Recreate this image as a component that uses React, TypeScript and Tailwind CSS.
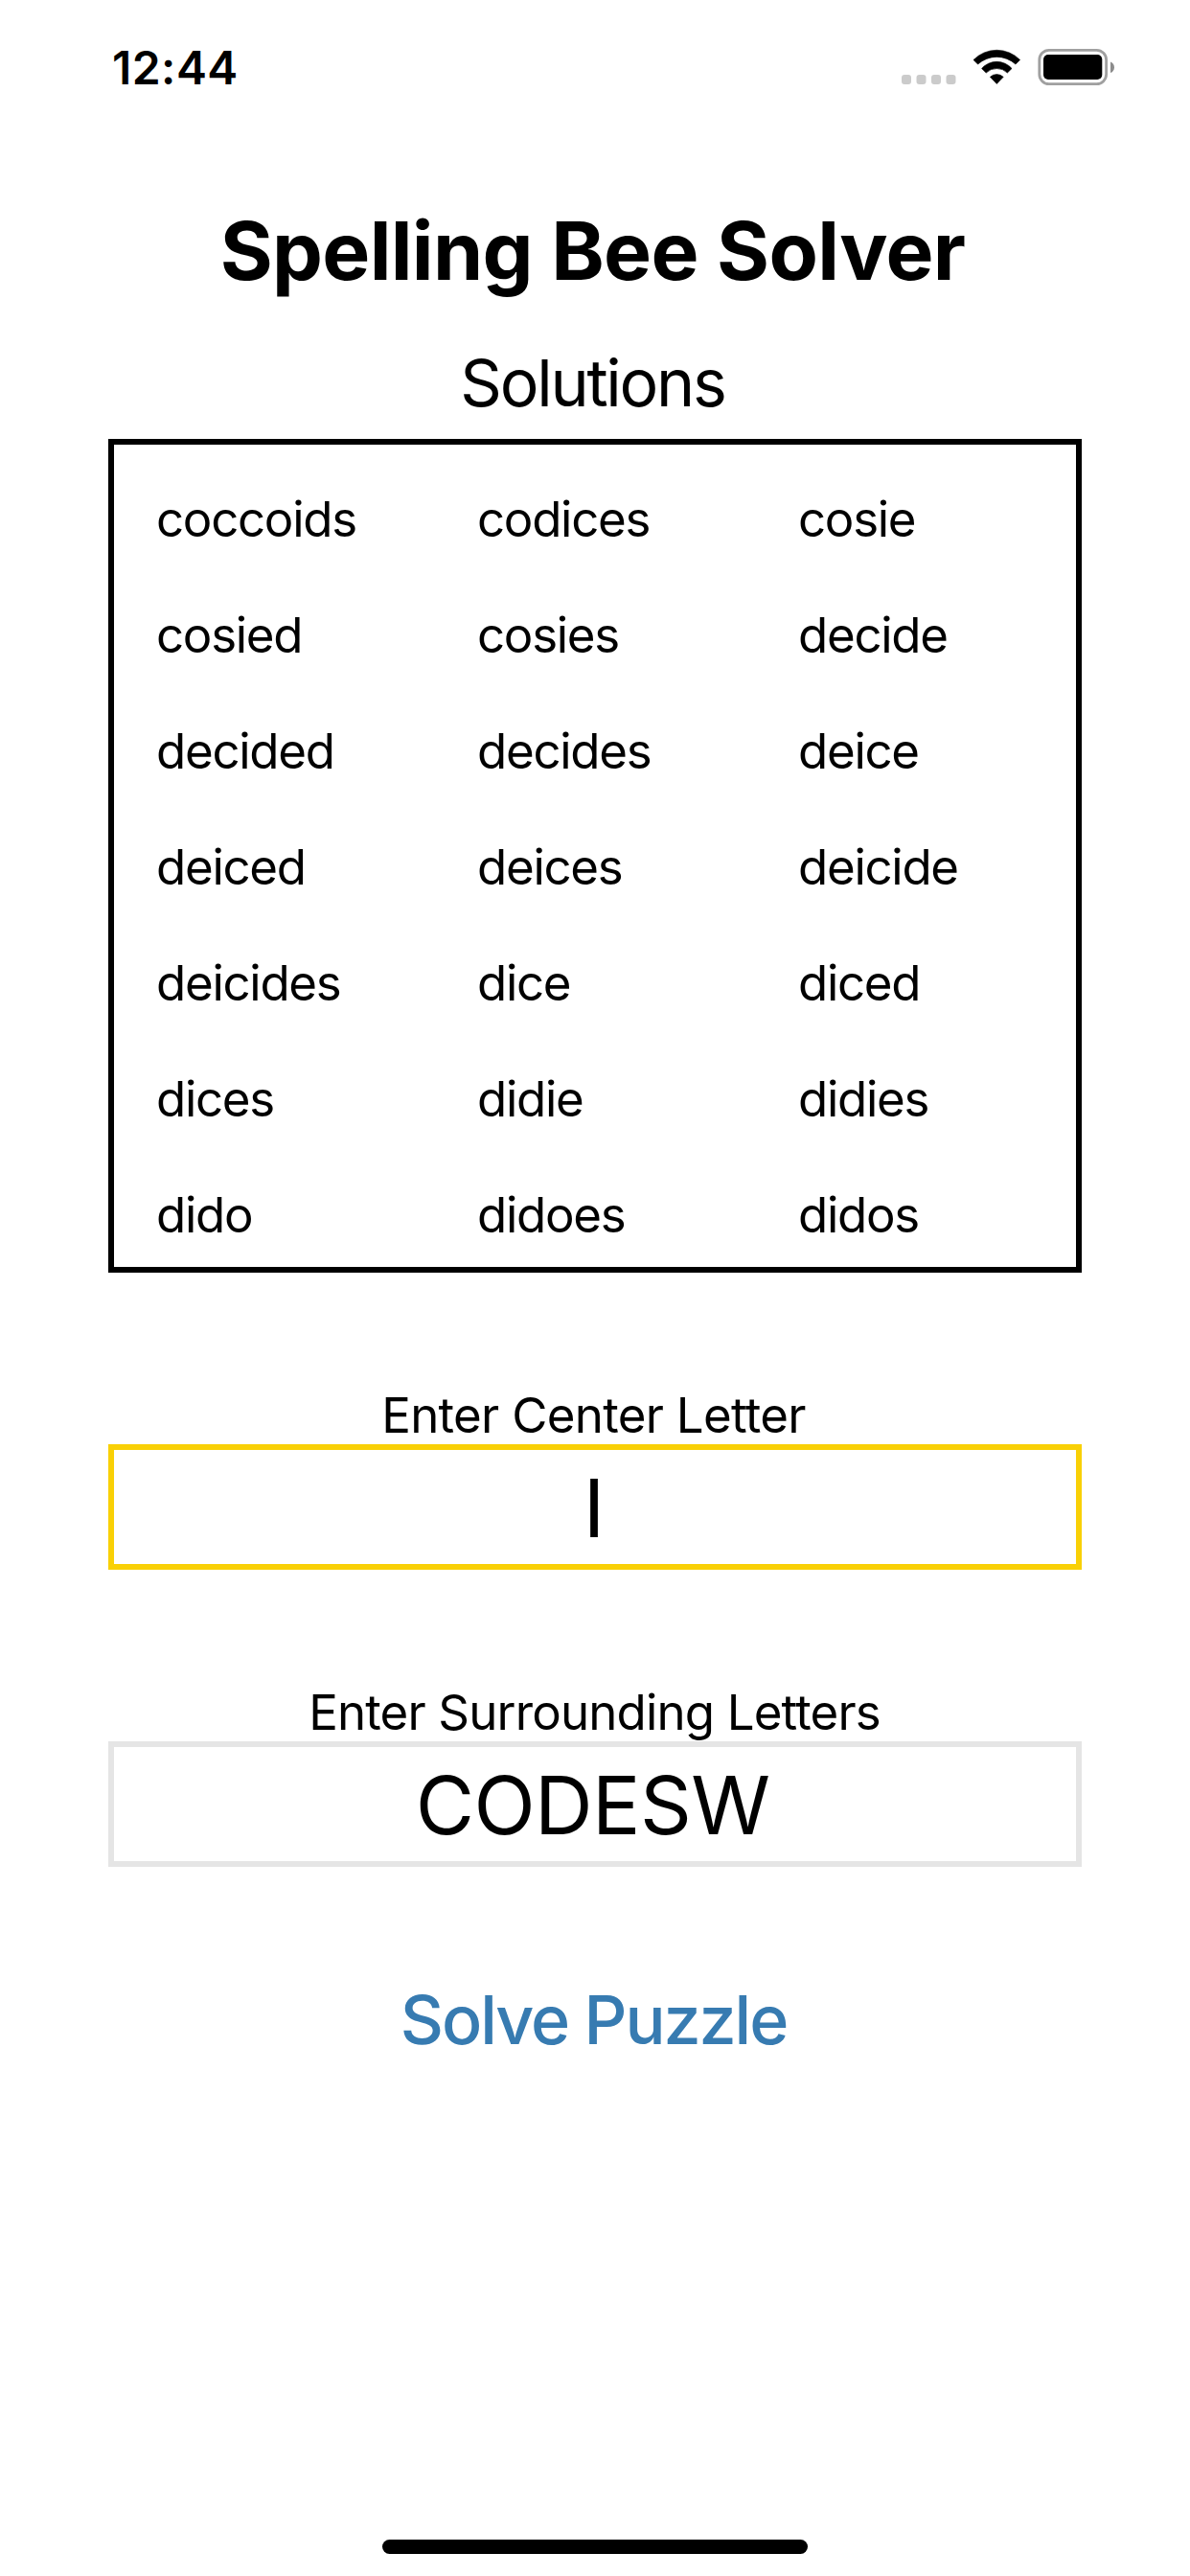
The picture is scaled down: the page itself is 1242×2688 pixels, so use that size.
const words = [
  "coccoids", "codices", "cosie",
  "cosied", "cosies", "decide",
  "decided", "decides", "deice",
  "deiced", "deices", "deicide",
  "deicides", "dice", "diced",
  "dices", "didie", "didies",
  "dido", "didoes", "didos",
];

function StatusIcons() {
  return (
    <svg className="mt-12 self-start" width="223" height="44" viewBox="0 0 223 44" aria-hidden="true">
      <g fill="#cbcbcb">
        <rect x="0" y="30" width="10" height="10" rx="3" />
        <rect x="15.5" y="30" width="10" height="10" rx="3" />
        <rect x="31" y="30" width="10" height="10" rx="3" />
        <rect x="46.5" y="30" width="10" height="10" rx="3" />
      </g>
      <g fill="#000" stroke="#000" strokeWidth="0.6" strokeLinejoin="round">
        <path d="M75 14.5A34 34 0 0 1 123.6 14.5L119 19.1A29 29 0 0 0 79.6 19.1Z" />
        <path d="M83.6 23.5A20.8 20.8 0 0 1 115 23.5L110.4 28A16 16 0 0 0 88.2 28Z" />
        <path d="M92.4 32.3A10 10 0 0 1 106.2 32.3L99.3 39.5Z" />
      </g>
      <rect x="143.8" y="4.4" width="69.8" height="35.2" rx="10" fill="none" stroke="#a0a0a0" strokeWidth="2.8" />
      <rect x="148" y="9" width="61.3" height="26" rx="5" fill="#000" />
      <path d="M218 16.4C220.500 17.300 222 19.500 222 22.200S220.500 27.100 218 28Z" fill="#8c8c8c" />
    </svg>
  );
}

function LetterField({ label, value, labelClass, boxClass }: { label: string; value: string; labelClass: string; boxClass: string }) {
  return (
    <div className="mx-[113px] mt-[118px] flex flex-col text-center first-of-type:mt-[118px]">
      <label className={`text-[51px] leading-[61px] ${labelClass}`}>{label}</label>
      <div className={`h-[131px] border-[6px] pt-[10px] text-[84px] leading-[101px] ${boxClass}`}>{value}</div>
    </div>
  );
}

export default function App() {
  return (
    <main className="flex h-[2688px] w-[1242px] flex-col bg-white font-['Inter',sans-serif] text-black">
      <header className="flex h-[141px] items-center justify-between pl-[117px] pr-[78px]">
        <time className="text-[48px] font-semibold leading-[58px] tracking-[0.46px]">12:44</time>
        <StatusIcons />
      </header>
      <h1 className="mt-[70px] pr-[5px] text-center text-[84px] font-bold leading-[101px] tracking-[-0.67px]">Spelling Bee Solver</h1>
      <h2 className="mt-[46px] pr-[5px] text-center text-[68px] leading-[82px] tracking-[-2.26px]">Solutions</h2>
      <section className="mx-[113px] mt-[18px] h-[870px] overflow-hidden border-[6px] border-black pl-[44px] pt-[17px]">
        <ul className="grid auto-rows-[121px] grid-cols-[335px_335px_auto] items-center text-[51px] leading-[61px] tracking-[-1.28px]">
          {words.map((w) => <li key={w}>{w}</li>)}
        </ul>
      </section>
      <LetterField label="Enter Center Letter" value="I" labelClass="pr-[3px] tracking-[-0.71px]" boxClass="border-[#f9d006] pr-[2px]" />
      <LetterField label="Enter Surrounding Letters" value="CODESW" labelClass="pr-px tracking-[-0.84px]" boxClass="border-[#e5e5e5] pr-[5px] tracking-[-0.64px]" />
      <button className="mx-auto mt-[117px] pr-[3px] text-[70px] font-medium leading-[85px] tracking-[-2.08px] text-[#377bb1]">Solve Puzzle</button>
      <div className="mx-auto mb-[23px] mt-auto h-[15px] w-[444px] rounded-full bg-black" />
    </main>
  );
}
